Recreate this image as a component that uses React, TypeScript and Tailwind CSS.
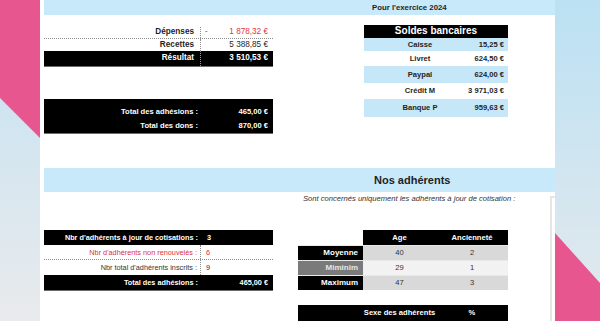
import React from 'react'

const BANKS = [
  { name: 'Caisse', value: '15,25 €', h: 'h-[13px]', bg: 'bg-[#c6e7f7]' },
  { name: 'Livret', value: '624,50 €', h: 'h-[15px]', bg: 'bg-white' },
  { name: 'Paypal', value: '624,00 €', h: 'h-[17px]', bg: 'bg-[#c6e7f7]' },
  { name: 'Crédit M', value: '3 971,03 €', h: 'h-[16px]', bg: 'bg-white' },
  { name: 'Banque P', value: '959,63 €', h: 'h-[18px]', bg: 'bg-[#c6e7f7]' },
]

const STATS = [
  { name: 'Moyenne', age: '40', anc: '2', label: 'bg-black text-white', data: 'bg-[#d9d9d9]' },
  { name: 'Miminim', age: '29', anc: '1', label: 'bg-[#7a7a7a] text-[#e6e6e6]', data: 'bg-[#f2f2f2]' },
  { name: 'Maximum', age: '47', anc: '3', label: 'bg-black text-white', data: 'bg-[#d9d9d9]' },
]

const App = () => {
  return (
    <div className="flex w-[600px] h-[321px] overflow-hidden font-['Liberation_Sans',Arial,sans-serif] text-[#1f1f1f] leading-none">
      {/* left decor */}
      <div className="relative w-[40px] h-full bg-linear-to-b from-[#c2e2f3] to-[#e9eaec]">
        <svg className="absolute inset-0" width="40" height="321" viewBox="0 0 40 321">
          <polygon points="0,0 40,0 40,138 0,98" fill="#e8568f" />
        </svg>
      </div>

      {/* sheet */}
      <div className="w-[515px] h-full bg-white pl-[4px] flex flex-col">
        <div className="h-[15px] bg-[#c8e9f9] flex items-center pl-[328px] text-[7.8px] font-bold">
          Pour l'exercice 2024
        </div>

        <div className="h-[154px] flex">
          <div className="w-[229px]">
            <div className="mt-[12px] text-[8.2px]">
              <div className="flex h-[12px] border-b border-dotted border-[#8c8c8c]">
                <div className="w-[157px] flex items-center justify-end pr-[6px] border-r border-dotted border-[#8c8c8c] font-bold">Dépenses</div>
                <div className="flex-1 flex items-center justify-between pl-[4px] pr-[5px] text-[#e3343e]">
                  <span>-</span>
                  <span>1 878,32 €</span>
                </div>
              </div>
              <div className="flex h-[12px]">
                <div className="w-[157px] flex items-center justify-end pr-[6px] border-r border-dotted border-[#8c8c8c] font-bold">Recettes</div>
                <div className="flex-1 flex items-center justify-end pr-[5px]">5 388,85 €</div>
              </div>
              <div className="flex h-[16px] bg-black text-white font-bold border-b border-[#6b6b6b]">
                <div className="w-[157px] flex items-center justify-end pr-[6px] border-r border-dotted border-[#9a9a9a]">Résultat</div>
                <div className="flex-1 flex items-center justify-end pr-[5px]">3 510,53 €</div>
              </div>
            </div>

            <div className="mt-[32px] h-[35px] bg-black text-white font-bold text-[7.6px] border-b border-[#6b6b6b]">
              <div className="flex h-[17px]">
                <div className="w-[157px] flex items-end justify-end pr-[3px]">Total des adhésions :</div>
                <div className="flex-1 flex items-end justify-end pr-[5px]">465,00 €</div>
              </div>
              <div className="flex h-[17px]">
                <div className="w-[157px] flex items-center justify-end pr-[3px] pt-[2px]">Total des dons :</div>
                <div className="flex-1 flex items-center justify-end pr-[5px] pt-[2px]">870,00 €</div>
              </div>
            </div>
          </div>

          <div className="ml-[91px] mt-[10px] w-[144px] text-[7.6px] font-bold">
            <div className="h-[13px] bg-black text-white text-[10px] flex items-center justify-center">
              Soldes bancaires
            </div>
            {BANKS.map((b) => (
              <div key={b.name} className={`flex ${b.h} ${b.bg}`}>
                <div className="w-[112px] flex items-center justify-center">{b.name}</div>
                <div className="w-[28px] flex items-center justify-end whitespace-nowrap">{b.value}</div>
              </div>
            ))}
          </div>
        </div>

        <div className="h-[24px] bg-[#c8e9f9] flex items-center pl-[330px] text-[11px] font-bold">
          Nos adhérents
        </div>

        <div className="flex flex-1">
          <div className="w-[229px] pt-[38px] text-[7.3px]">
            <div className="flex h-[15px] bg-black text-white font-bold">
              <div className="w-[157px] flex items-center justify-end pr-[3px]">Nbr d'adhérents à jour de cotisations :</div>
              <div className="flex-1 flex items-center pl-[6px]">3</div>
            </div>
            <div className="flex h-[15px] border-b border-dotted border-[#8c8c8c] text-[#d9343c]">
              <div className="w-[157px] flex items-center justify-end pr-[3px] border-r border-dotted border-[#8c8c8c]">Nbr d'adhérents non renouvelés :</div>
              <div className="flex-1 flex items-center pl-[5px]">6</div>
            </div>
            <div className="flex h-[15px] text-[#333]">
              <div className="w-[157px] flex items-center justify-end pr-[3px] border-r border-dotted border-[#8c8c8c]">Nbr total d'adhérents inscrits :</div>
              <div className="flex-1 flex items-center pl-[5px]">9</div>
            </div>
            <div className="flex h-[16px] bg-black text-white font-bold border-b border-[#6b6b6b]">
              <div className="w-[157px] flex items-center justify-end pr-[3px]">Total des adhésions :</div>
              <div className="flex-1 flex items-center justify-end pr-[5px]">465,00 €</div>
            </div>
          </div>

          <div className="ml-[25px] w-[222px] text-[7.6px]">
            <p className="mt-[3px] pl-[5px] italic text-[#333] whitespace-nowrap">
              Sont concernés uniquement les adhérents à jour de cotisation :
            </p>
            <div className="mt-[27px] w-[210px]">
              <div className="flex h-[15px] font-bold">
                <div className="w-[65px]" />
                <div className="w-[73px] bg-black text-white flex items-center justify-center">Age</div>
                <div className="w-[72px] bg-black text-white flex items-center justify-center">Ancienneté</div>
              </div>
              {STATS.map((s) => (
                <div key={s.name} className="flex h-[15px] border-t border-[#e8e8e8]">
                  <div className={`w-[65px] flex items-center justify-end pr-[5px] font-bold text-[8px] ${s.label}`}>{s.name}</div>
                  <div className={`w-[73px] flex items-center justify-center text-[#333] ${s.data}`}>{s.age}</div>
                  <div className={`w-[72px] flex items-center justify-center text-[#333] ${s.data}`}>{s.anc}</div>
                </div>
              ))}
              <div className="mt-[15px] flex h-[16px] bg-black text-white font-bold">
                <div className="w-[65px]" />
                <div className="w-[73px] flex items-center justify-center whitespace-nowrap">Sexe des adhérents</div>
                <div className="w-[72px] flex items-center justify-center">%</div>
              </div>
            </div>
          </div>

          <div className="ml-[30px] mt-[4px] flex-1 border-l-2 border-t-2 border-[#e6e6e6]" />
        </div>
      </div>

      {/* right decor */}
      <div className="relative flex-1 h-full bg-linear-to-b from-[#bbe1f3] to-[#e4e9ed]">
        <svg className="absolute inset-0" width="45" height="321" viewBox="0 0 45 321">
          <polygon points="0,233 45,283 45,321 0,321" fill="#e8568f" />
        </svg>
      </div>
    </div>
  )
}

export default App
